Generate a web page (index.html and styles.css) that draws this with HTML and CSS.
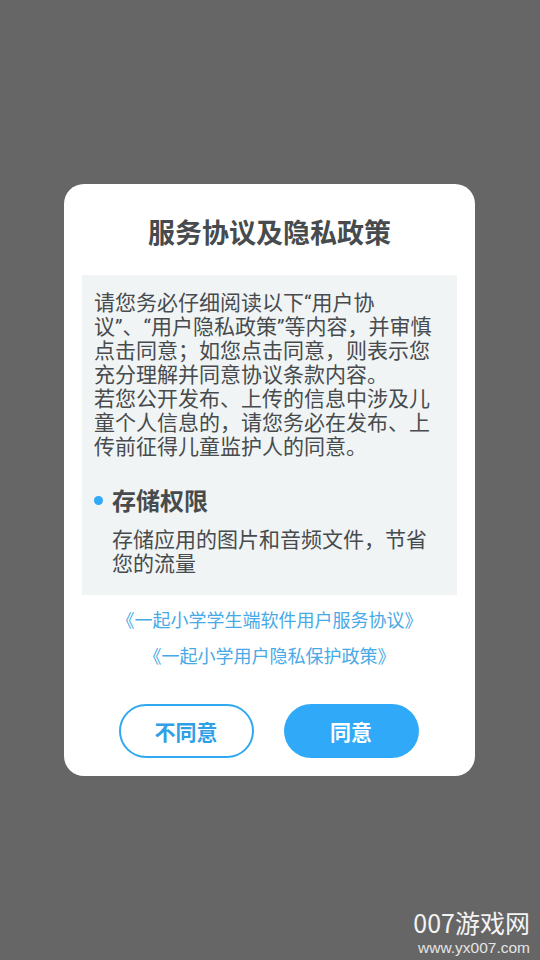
FILE: index.html
```html
<!DOCTYPE html>
<html>
<head>
    <meta charset="UTF-8">
    <title>服务协议及隐私政策</title>
    <link rel="stylesheet" href="styles.css">
</head>
<body>
    <div class="dialog">
        <div class="dialog-title">服务协议及隐私政策</div>
        <div class="notice">
            <p class="notice-text">请您务必仔细阅读以下<span class="quote">“</span>用户协<br>议<span class="quote">”</span>、<span class="quote">“</span>用户隐私政策<span class="quote">”</span>等内容，并审慎<br>点击同意；如您点击同意，则表示您<br>充分理解并同意协议条款内容。<br>若您公开发布、上传的信息中涉及儿<br>童个人信息的，请您务必在发布、上<br>传前征得儿童监护人的同意。</p>
            <div class="perm-title"><span class="perm-dot"></span>存储权限</div>
            <p class="perm-text">存储应用的图片和音频文件，节省<br>您的流量</p>
        </div>
        <a class="doc-link first">《一起小学学生端软件用户服务协议》</a>
        <a class="doc-link">《一起小学用户隐私保护政策》</a>
        <div class="actions">
            <button class="btn btn-outline">不同意</button>
            <button class="btn btn-primary">同意</button>
        </div>
    </div>
    <div class="watermark">
        <div class="watermark-name">007游戏网</div>
        <div class="watermark-url">www.yx007.com</div>
    </div>
</body>
</html>
```

FILE: styles.css
```css
body {
    font-family: "Noto Sans CJK SC", "Noto Sans", sans-serif;
    margin: 0;
    width: 540px;
    height: 960px;
    overflow: hidden;
    background-color: #666666;
    display: flex;
    align-items: center;
    justify-content: center;
    position: relative;
}

.dialog {
    width: 411px;
    height: 592px;
    box-sizing: border-box;
    margin-right: 1px;
    padding: 0 18px;
    background-color: #fff;
    border-radius: 20px;
    display: flex;
    flex-direction: column;
}

.dialog-title {
    height: 91px;
    line-height: 95px;
    text-align: center;
    font-size: 27px;
    font-weight: 700;
    color: #474b4d;
}

.notice {
    height: 320px;
    box-sizing: border-box;
    padding: 14px 12px 0 12px;
    background-color: #f0f4f5;
    color: #474b4d;
    font-size: 21px;
}

.notice-text {
    margin: 0;
    line-height: 24px;
    white-space: nowrap;
}

/* narrow latin quotes, the CJK ones are too wide here */
.quote {
    font-family: "Roboto", sans-serif;
    line-height: 0;
}

.perm-title {
    display: flex;
    align-items: center;
    margin-top: 27px;
    line-height: 32px;
    font-size: 24px;
    font-weight: 700;
}

.perm-dot {
    width: 9px;
    height: 9px;
    margin-right: 9px;
    border-radius: 50%;
    background-color: #30a9f7;
}

.perm-text {
    margin: 10px 0 0 18px;
    line-height: 24px;
    white-space: nowrap;
}

.doc-link {
    display: block;
    text-align: center;
    font-size: 18px;
    line-height: 26px;
    color: #47a9e6;
    margin-top: 10px;
    white-space: nowrap;
}

.doc-link.first {
    margin-top: 11px;
}

.actions {
    display: flex;
    justify-content: center;
    gap: 30px;
    margin-top: 36px;
    margin-right: 2px;
}

.btn {
    width: 135px;
    height: 54px;
    box-sizing: border-box;
    border-radius: 27px;
    font-family: inherit;
    font-size: 21px;
    font-weight: 700;
    padding: 0;
}

.btn-outline {
    background-color: #fff;
    border: 2px solid #30a9f0;
    color: #30a0e6;
}

.btn-primary {
    background-color: #30aaf8;
    border: none;
    color: #fff;
}

/* site stamp in the corner, lies over the page */
.watermark {
    position: absolute;
    right: 10px;
    bottom: 2px;
    text-align: right;
    color: #f4f4f4;
}

.watermark-name {
    font-size: 25px;
    line-height: 32px;
    white-space: nowrap;
}

.watermark-url {
    font-family: "Liberation Sans", sans-serif;
    font-size: 15.5px;
    line-height: 20px;
    color: #e4e4e4;
}
```
